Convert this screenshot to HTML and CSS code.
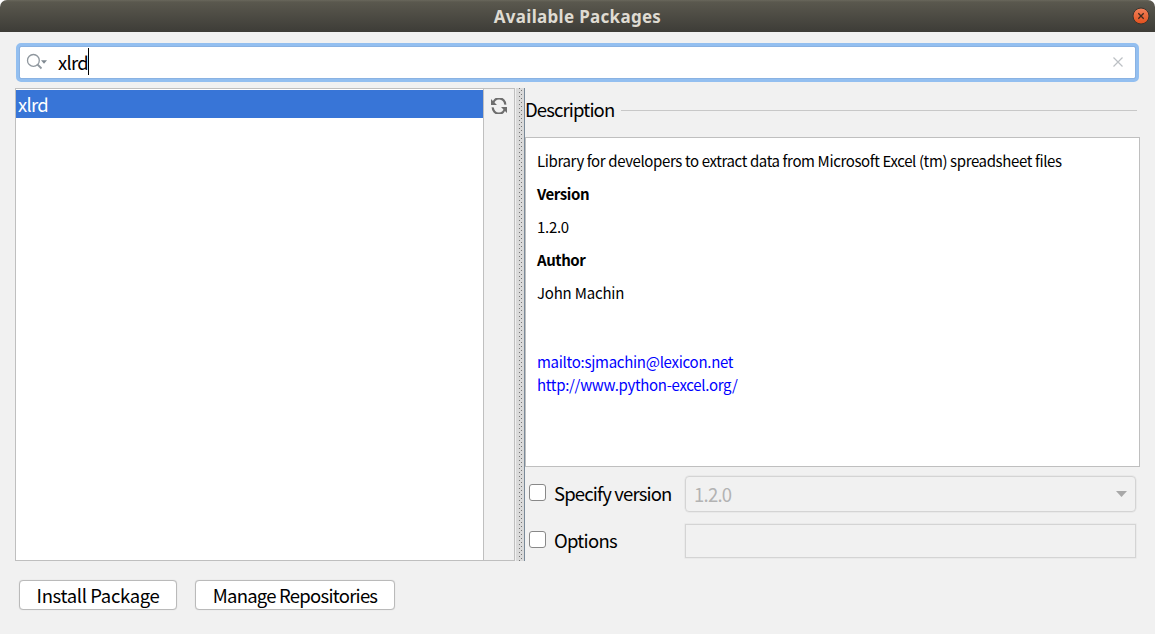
FILE: index.html
```html
<!DOCTYPE html>
<html lang="en">
<head>
<meta charset="utf-8">
<title>Available Packages</title>
<link rel="stylesheet" href="styles.css">
</head>
<body>
<div class="window">
  <header class="titlebar">
    <h1 class="title">Available Packages</h1>
    <svg class="close" width="18" height="18" viewBox="0 0 18 18">
      <defs><linearGradient id="g" x1="0" y1="0" x2="0" y2="1"><stop offset="0" stop-color="#f3825c"/><stop offset="1" stop-color="#e2501c"/></linearGradient></defs>
      <circle cx="9" cy="9" r="8" fill="url(#g)" stroke="#38352e"/>
      <path d="M6.3 6.3l5.4 5.4M11.7 6.3l-5.4 5.4" stroke="#3c2a20" stroke-width="1.3"/>
    </svg>
  </header>
  <div class="search">
    <svg class="loupe" width="21" height="17" viewBox="0 0 21 17">
      <circle cx="7.4" cy="7.4" r="5.9" fill="none" stroke="#8f979e" stroke-width="1.3"/>
      <path d="M11.5 11.5l4 4" stroke="#8f979e" stroke-width="1.8"/>
      <path d="M15 7.3h6l-3 3.4z" fill="#7f8890"/>
    </svg>
    <span class="query">xlrd</span><span class="caret"></span>
    <svg class="clear" width="10" height="10" viewBox="0 0 10 10"><path d="M.5.5l9 9M9.5.5l-9 9" stroke="#bcc0c4" stroke-width="1.2"/></svg>
  </div>
  <main class="main">
    <section class="packages">
      <div class="list"><div class="item">xlrd</div></div>
      <div class="tools">
        <svg width="16" height="16" viewBox="0 0 16 16">
          <path d="M2 6.2A6.1 6.1 0 0 1 14.2 6.6M14 9.8A6.1 6.1 0 0 1 1.8 9.4" fill="none" stroke="#6e6e6e" stroke-width="2.2"/>
          <path d="M0 1v6h6zM16 15V9h-6z" fill="#6e6e6e"/>
        </svg>
      </div>
    </section>
    <div class="splitter"></div>
    <section class="details">
      <div class="heading"><h2>Description</h2><span class="rule"></span></div>
      <div class="description">
        <p class="summary">Library for developers to extract data from Microsoft Excel (tm) spreadsheet files</p>
        <p class="strong">Version</p>
        <p>1.2.0</p>
        <p class="strong">Author</p>
        <p class="author">John Machin</p>
        <a class="mail">mailto:sjmachin@lexicon.net</a>
        <a class="site">http://www.python-excel.org/</a>
      </div>
      <div class="option version-row"><span class="box"></span><span class="label specify">Specify version</span>
        <div class="combo"><span>1.2.0</span><svg width="11" height="6" viewBox="0 0 11 6"><path d="M0 0h11L5.5 6z" fill="#a8a8a8"/></svg></div></div>
      <div class="option"><span class="box"></span><span class="label">Options</span><div class="field"></div></div>
    </section>
  </main>
  <footer class="buttons">
    <button class="button install">Install Package</button>
    <button class="button manage">Manage Repositories</button>
  </footer>
</div>
</body>
</html>
```
FILE: styles.css
```css
* { box-sizing: border-box; }
body { margin: 0; background: #fff; }
.window {
  width: 1155px; height: 634px; display: flex; flex-direction: column;
  background: #f1f1f1; border-radius: 7px 7px 0 0; overflow: hidden;
  font-family: "Noto Sans CJK SC", sans-serif; font-size: 18.5px; letter-spacing: -.74px; color: #000;
}
.titlebar {
  height: 32px; flex: none; display: grid; grid-template-columns: 1fr auto 1fr; align-items: center;
  background: linear-gradient(#69675c 0, #5a584e 2px, #3d3c37 100%);
}
.title { grid-column: 2; margin: 0; padding-top: 1px; font: bold 17px/31px "Noto Sans", sans-serif; letter-spacing: .3px; color: #dfdbd2; }
.close { justify-self: end; margin-right: 5px; }
.search {
  margin: 11px 16px 0; height: 39px; flex: none; display: flex; align-items: center;
  background: #fff; border: 4px solid #93bff0; border-radius: 5px; outline: 1px solid #8ab2e2; outline-offset: -4px; padding: 0 12px 2px 6px;
}
.loupe { flex: none; margin-right: 11px; }
.query { line-height: 30px; }
.caret { width: 1px; height: 27px; background: #000; }
.clear { margin-left: auto; }
.main { display: flex; margin: 6px 15px 0; height: 473px; flex: none; }
.packages { width: 500px; display: flex; border: 1px solid #bfbfbf; }
.list { width: 467px; background: #fff; padding-top: 1px; }
.item { height: 28px; line-height: 29px; padding-left: 2px; background: #3875d7; color: #fff; }
.tools { flex: 1; border-left: 1px solid #bfbfbf; padding: 9px 0 0 7px; line-height: 0; }
.splitter {
  width: 10px; border-left: 1px solid #f1f1f1; border-right: 1px solid #7a8a99;
  background: radial-gradient(circle at 3.5px .5px, #777 .6px, transparent .7px), radial-gradient(circle at 5.5px 2.5px, #777 .6px, transparent .7px), #dadada;
  background-size: 8px 4px;
}
.details { flex: 1; display: flex; flex-direction: column; }
.heading { height: 49px; display: flex; align-items: center; gap: 7px; padding: 0 3px 4px 0; }
.heading h2 { margin: 0; padding-bottom: 2px; font-size: 18.5px; font-weight: 400; line-height: 43px; letter-spacing: -.88px; }
.rule { flex: 1; height: 1px; background: #c8c8c8; }
.description {
  height: 330px; flex: none; display: flex; flex-direction: column; align-items: flex-start;
  border: 1px solid #bfbfbf; background: #fff; padding: 11px; font-size: 15px; line-height: 23px; letter-spacing: -.28px;
}
.description p { margin: 0 0 10px; white-space: nowrap; }
.description .summary { letter-spacing: -.38px; }
.description .author { margin-bottom: 46px; letter-spacing: -.2px; }
.description a { color: #00f; }
.description .site { letter-spacing: -.31px; }
.description .strong { font-weight: 700; letter-spacing: -.42px; }
.option { display: flex; height: 34px; margin: 12px 4px 0; }
.version-row { height: 36px; margin-top: 9px; }
.box { width: 17px; height: 17px; margin-top: 7px; border: 1px solid #888; border-radius: 3px; background: #fff; flex: none; }
.label { width: 139px; flex: none; padding-left: 8px; line-height: 33px; white-space: nowrap; }
.version-row .box { margin-top: 8px; }
.version-row .label { line-height: 35px; letter-spacing: -.85px; }
.combo, .field { flex: 1; border: 1px solid #d4d4d4; box-shadow: 0 0 0 .5px #e2e2e2; }
.combo { border-radius: 4px; display: flex; align-items: center; justify-content: space-between; padding: 0 8px 1px 8px; color: #b3b3b3; }
.buttons { display: flex; gap: 18px; padding: 19px 18px 0; }
.button {
  height: 30px; padding: 0; border: 1px solid #bababa; border-radius: 4px; background: #fff; white-space: nowrap;
  box-shadow: 0 0 1px #c8c8c8; font: 18.5px/28px "Noto Sans CJK SC", sans-serif; letter-spacing: -.76px; color: #000;
}
.install { width: 158px; margin-left: 1px; letter-spacing: -.35px; padding-bottom: 2px; }
.manage { width: 200px; padding-bottom: 2px; }
```
